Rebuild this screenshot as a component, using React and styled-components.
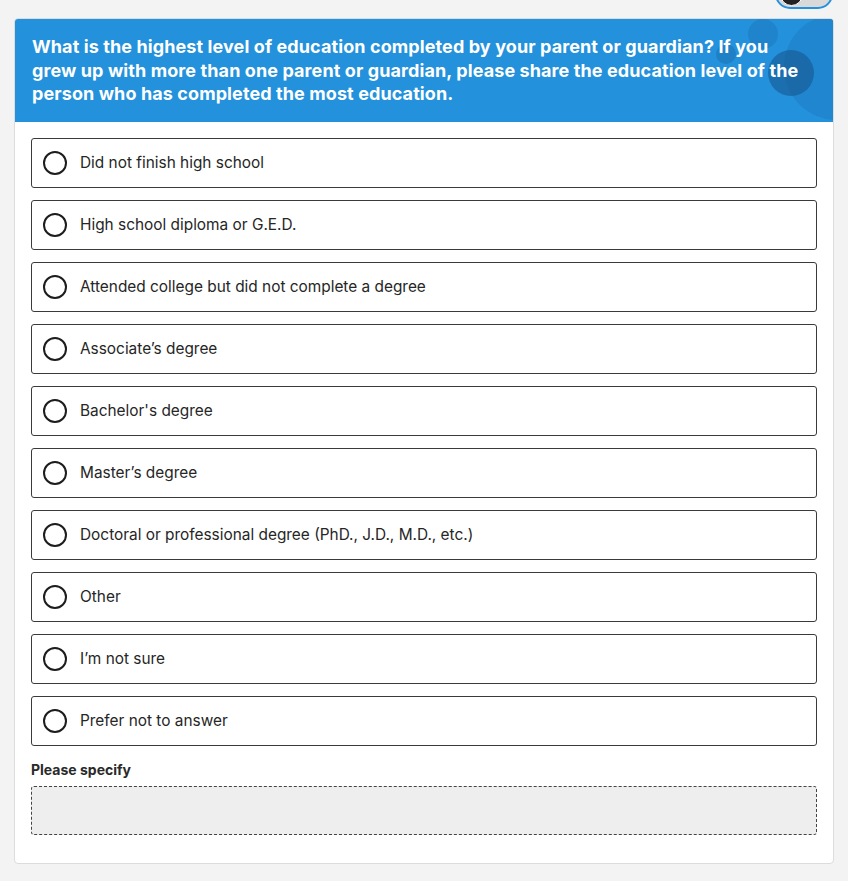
import React from 'react'
import styled, { createGlobalStyle } from 'styled-components'

const GlobalStyle = createGlobalStyle`
  html, body {
    margin: 0;
    background: #f3f3f3;
    font-family: Inter, 'Liberation Sans', sans-serif;
  }
`

const Page = styled.div`
  position: relative;
  padding: 18px 14px 17px 14px;
`

const Toggle = styled.div`
  position: absolute;
  top: -21px;
  right: 15px;
  width: 48px;
  height: 26px;
  border: 2px solid #2391db;
  border-radius: 16px;
  background: #d9d9d9;
  display: flex;
  align-items: center;
  padding: 0 3px;
  & > span {
    width: 21px;
    height: 21px;
    border-radius: 50%;
    background: #222;
    border: 1px solid #fff;
  }
`

const Card = styled.div`
  background: white;
  border: 1px solid #dcdcdc;
  border-radius: 4px;
  overflow: hidden;
`

const Header = styled.div`
  position: relative;
  overflow: hidden;
  background: #2391db;
  padding: 16px 17px 16px 17px;
  & h2 {
    position: relative;
    margin: 0;
    color: white;
    font-size: 18px;
    line-height: 23.5px;
    font-weight: 700;
    letter-spacing: 0.1px;
    max-width: 785px;
  }
`

const Bubble = styled.div`
  position: absolute;
  border-radius: 50%;
  left: ${p => p.x - p.r}px;
  top: ${p => p.y - p.r}px;
  width: ${p => p.r * 2}px;
  height: ${p => p.r * 2}px;
  background: ${p => p.color};
`

const Body = styled.div`
  padding: 16px 16px 28px 16px;
  display: flex;
  flex-direction: column;
`

const Options = styled.div`
  display: flex;
  flex-direction: column;
  gap: 12px;
`

const Option = styled.label`
  display: flex;
  align-items: center;
  gap: 13px;
  height: 48px;
  padding: 0 11px;
  border: 1px solid #3a3a3a;
  border-radius: 3px;
  font-size: 15.4px;
  color: #262626;
`

const Radio = styled.span`
  width: 20px;
  height: 20px;
  border: 2px solid #1d1d1d;
  border-radius: 50%;
  flex: none;
`

const Label = styled.div`
  margin-top: 15px;
  font-size: 14px;
  font-weight: 700;
  color: #2a2a2a;
  line-height: 18px;
`

const Specify = styled.div`
  margin-top: 7px;
  height: 47px;
  border: 1px dashed #444;
  border-radius: 3px;
  background: #eeeeee;
`

const choices = [
  'Did not finish high school',
  'High school diploma or G.E.D.',
  'Attended college but did not complete a degree',
  'Associate\u2019s degree',
  "Bachelor's degree",
  'Master\u2019s degree',
  'Doctoral or professional degree (PhD., J.D., M.D., etc.)',
  'Other',
  'I\u2019m not sure',
  'Prefer not to answer',
]

const App = () => {
  return (
    <Page>
      <GlobalStyle />
      <Toggle><span /></Toggle>
      <Card>
        <Header>
          <Bubble x={822} y={48} r={53} color="#1f86cf" />
          <Bubble x={748} y={15} r={15} color="#1f84cc" />
          <Bubble x={711} y={35} r={10} color="#1f80c6" />
          <Bubble x={776} y={54} r={23} color="rgba(20, 70, 120, 0.45)" />
          <h2>
            What is the highest level of education completed by your parent or guardian? If you
            grew up with more than one parent or guardian, please share the education level of
            the person who has completed the most education.
          </h2>
        </Header>
        <Body>
          <Options>
            {choices.map(c => (
              <Option key={c}>
                <Radio />
                {c}
              </Option>
            ))}
          </Options>
          <Label>Please specify</Label>
          <Specify />
        </Body>
      </Card>
    </Page>
  )
}

export default App
